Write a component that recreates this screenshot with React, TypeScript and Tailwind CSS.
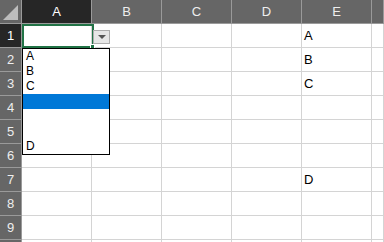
import React from "react";

const cols = ["A", "B", "C", "D", "E", ""];
const rows = [1, 2, 3, 4, 5, 6, 7, 8, 9, 10];
const eValues: Record<number, string> = { 1: "A", 2: "B", 3: "C", 7: "D" };
const listItems = ["A", "B", "C", "", "", "", "D"];

export default function App() {
  return (
    <div
      className="relative w-[384px] h-[242px] overflow-hidden bg-white text-[13px] text-black"
      style={{ fontFamily: '"Liberation Sans", Arial, sans-serif' }}
    >
      <div className="grid grid-cols-[22px_70px_70px_70px_70px_70px_1fr] grid-rows-[24px_repeat(10,24px)]">
        {/* corner */}
        <div className="relative bg-[#666666] border-r border-b border-[#9a9a9a]">
          <div className="absolute right-[3px] bottom-[3px] w-0 h-0 border-l-[15px] border-l-transparent border-b-[15px] border-b-[#bdbdbd]" />
        </div>
        {cols.map((c, i) => (
          <div
            key={`h_${i}`}
            className={`flex items-center justify-center border-r border-b border-[#9a9a9a] ${
              c === "A" ? "bg-[#262626] text-white" : "bg-[#666666] text-[#eeeeee]"
            }`}
          >
            {c}
          </div>
        ))}
        {rows.map((r) => (
          <React.Fragment key={`r_${r}`}>
            <div
              className={`flex items-center justify-center border-r border-b border-[#9a9a9a] ${
                r === 1 ? "bg-[#262626] text-white" : "bg-[#666666] text-[#eeeeee]"
              }`}
            >
              {r < 10 ? r : ""}
            </div>
            {cols.map((c, i) => (
              <div key={`c_${r}_${i}`} className="flex items-center pl-[2px] border-r border-b border-[#d4d4d4]">
                {c === "E" ? eValues[r] ?? "" : ""}
              </div>
            ))}
          </React.Fragment>
        ))}
      </div>

      {/* selected cell */}
      <div className="absolute left-[22px] top-[24px] w-[72px] h-[24px] border-2 border-[#217346]" />
      <div className="absolute left-[90px] top-[44px] w-[5px] h-[5px] bg-[#217346] border border-white" />

      {/* dropdown button */}
      <div className="absolute left-[93px] top-[30px] w-[17px] h-[14px] bg-[#e6e6e6] border border-[#acacac] flex items-center justify-center">
        <div className="w-0 h-0 border-l-[4px] border-r-[4px] border-t-[4px] border-l-transparent border-r-transparent border-t-[#555555]" />
      </div>

      {/* dropdown list */}
      <div className="absolute left-[22px] top-[48px] w-[88px] h-[107px] bg-white border border-black">
        {listItems.map((item, i) => (
          <div
            key={`li_${i}`}
            className={`h-[15px] leading-[15px] pl-[3px] text-[12px] ${i === 3 ? "bg-[#0078d7]" : ""}`}
          >
            {item}
          </div>
        ))}
      </div>
    </div>
  );
}
